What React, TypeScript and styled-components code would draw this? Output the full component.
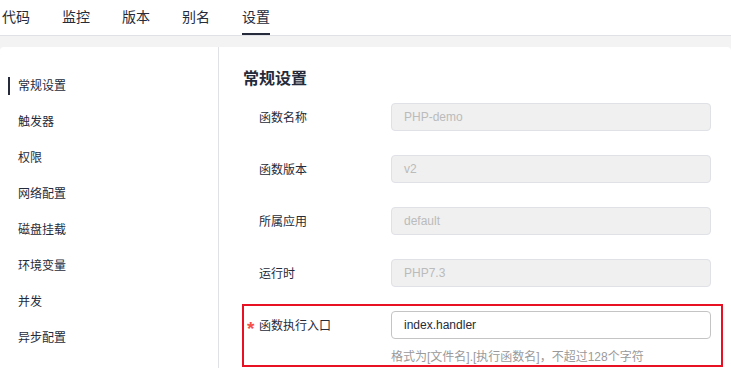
import React from "react";
import styled, { createGlobalStyle } from "styled-components";

const Global = createGlobalStyle`
  html, body { margin: 0; padding: 0; background: #fff; }
  body {
    font-family: "Liberation Sans", "Noto Sans CJK SC", sans-serif;
    color: #252b3a;
    width: 731px;
    height: 368px;
    overflow: hidden;
  }
  * { box-sizing: border-box; }
`;

const Page = styled.div`
  display: flex;
  flex-direction: column;
  height: 368px;
`;

const Tabs = styled.div`
  display: flex;
  gap: 32px;
  padding-left: 2px;
  height: 36px;
  border-bottom: 1px solid #dfe1e6;
  background: #fff;
`;

const Tab = styled.div<{ $active?: boolean }>`
  height: 35px;
  line-height: 34px;
  font-size: 14px;
  color: #252b3a;
  border-bottom: 2px solid ${(p) => (p.$active ? "#252b3a" : "transparent")};
`;

const Band = styled.div`
  flex: 1;
  background: #f3f3f3;
  padding-top: 11px;
  display: flex;
`;

const Card = styled.div`
  flex: 1;
  display: flex;
  background: #fff;
  border-radius: 4px 4px 0 0;
`;

const Menu = styled.div`
  width: 219px;
  border-right: 1px solid #dfe1e6;
  padding-top: 20px;
  display: flex;
  flex-direction: column;
`;

const MenuItem = styled.div<{ $active?: boolean }>`
  position: relative;
  height: 36px;
  padding-top: 2px;
  line-height: 34px;
  padding-left: 18px;
  font-size: 12px;
  color: #252b3a;
  &::before {
    content: "";
    display: ${(p) => (p.$active ? "block" : "none")};
    position: absolute;
    left: 8px;
    top: 10px;
    width: 2px;
    height: 18px;
    background: #252b3a;
  }
`;

const Content = styled.div`
  flex: 1;
  padding: 19px 20px 0 24px;
  display: flex;
  flex-direction: column;
`;

const Heading = styled.div`
  font-size: 16px;
  font-weight: bold;
  padding-top: 1px;
  line-height: 23px;
  height: 24px;
  margin-bottom: 13px;
`;

const Form = styled.div`
  display: flex;
  flex-direction: column;
  gap: 24px;
`;

const Row = styled.div`
  display: grid;
  grid-template-columns: 148px 1fr;
  align-items: center;
`;

const Label = styled.div`
  font-size: 12px;
  padding-left: 16px;
  padding-top: 2px;
  color: #252b3a;
  line-height: 26px;
  height: 28px;
`;

const Star = styled.span`
  display: inline-block;
  width: 12px;
  margin-left: -12px;
  color: #f5504a;
  font-size: 19px;
  font-weight: bold;
  vertical-align: -5px;
  line-height: 12px;
`;

const Input = styled.div<{ $disabled?: boolean }>`
  height: 28px;
  line-height: 26px;
  border-radius: 4px;
  border: 1px solid ${(p) => (p.$disabled ? "#dfe1e6" : "#c4c4c4")};
  background: ${(p) => (p.$disabled ? "#f0f0f0" : "#fff")};
  color: ${(p) => (p.$disabled ? "#bbbbbb" : "#252b3a")};
  font-size: 12px;
  padding-left: 12px;
`;

const Highlight = styled.div`
  position: relative;
  display: flex;
  flex-direction: column;
  &::after {
    content: "";
    position: absolute;
    top: -7px;
    left: -1px;
    right: -12px;
    bottom: -1px;
    border: 2px solid #e81123;
    pointer-events: none;
  }
`;

const Hint = styled.div`
  margin-left: 148px;
  margin-top: 9px;
  padding-top: 1px;
  font-size: 12px;
  line-height: 17px;
  color: #9a9a9a;
`;

const tabs = ["代码", "监控", "版本", "别名", "设置"];
const menu = ["常规设置", "触发器", "权限", "网络配置", "磁盘挂载", "环境变量", "并发", "异步配置"];
const fields = [
  { label: "函数名称", value: "PHP-demo" },
  { label: "函数版本", value: "v2" },
  { label: "所属应用", value: "default" },
  { label: "运行时", value: "PHP7.3" },
];

export default function App() {
  return (
    <Page>
      <Global />
      <Tabs>
        {tabs.map((t) => (
          <Tab key={t} $active={t === "设置"}>
            {t}
          </Tab>
        ))}
      </Tabs>
      <Band>
        <Card>
          <Menu>
            {menu.map((m, i) => (
              <MenuItem key={m} $active={i === 0}>
                {m}
              </MenuItem>
            ))}
          </Menu>
          <Content>
            <Heading>常规设置</Heading>
            <Form>
              {fields.map((f) => (
                <Row key={f.label}>
                  <Label>{f.label}</Label>
                  <Input $disabled>{f.value}</Input>
                </Row>
              ))}
              <Highlight>
                <Row>
                  <Label>
                    <Star>*</Star>函数执行入口
                  </Label>
                  <Input>index.handler</Input>
                </Row>
                <Hint>格式为[文件名].[执行函数名]，不超过128个字符</Hint>
              </Highlight>
            </Form>
          </Content>
        </Card>
      </Band>
    </Page>
  );
}
